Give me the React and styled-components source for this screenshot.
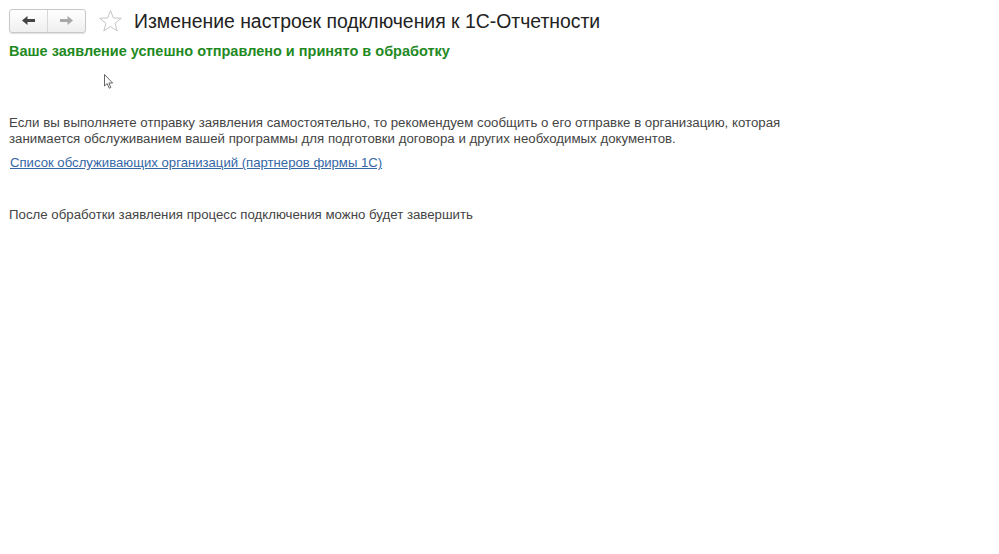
import styled, { createGlobalStyle } from "styled-components";

const GlobalStyle = createGlobalStyle`
  body {
    margin: 0;
    background: #fff;
    font-family: "Liberation Sans", Arial, sans-serif;
  }
`;

const Page = styled.div`
  position: relative;
  width: 999px;
  height: 554px;
  padding: 8px 9px 0 9px;
  box-sizing: border-box;
`;

const Header = styled.div`
  display: flex;
  align-items: center;
  height: 25px;
`;

const NavGroup = styled.div`
  display: flex;
  width: 77px;
  height: 24px;
  border: 1px solid #c8c8c8;
  border-radius: 3px;
  box-sizing: border-box;
  background: linear-gradient(#ffffff, #efefef);
  box-shadow: 0 1px 1px rgba(0, 0, 0, 0.12);
`;

const NavButton = styled.div`
  flex: 1;
  display: flex;
  align-items: center;
  justify-content: center;
  border-left: ${(p) => (p.$divider ? "1px solid #d8d8d8" : "none")};
`;

const StarWrap = styled.div`
  margin-left: 12px;
  width: 26px;
  height: 24px;
  display: flex;
  align-items: center;
`;

const Title = styled.h1`
  margin: 0 0 0 10px;
  font-size: 19.4px;
  font-weight: normal;
  color: #222;
  line-height: 24px;
`;

const Success = styled.div`
  margin-top: 10px;
  font-size: 14.5px;
  font-weight: bold;
  color: #1f8a1f;
  line-height: 16px;
`;

const Text = styled.p`
  margin: ${(p) => p.$top}px 0 0 0;
  font-size: 13.25px;
  line-height: 16px;
  color: #444;
  max-width: 800px;
`;

const Link = styled.a`
  display: inline-block;
  margin: 8px 0 0 1px;
  font-size: 13.15px;
  line-height: 16px;
  color: #3566a6;
  text-decoration: underline;
  cursor: pointer;
`;

const Pointer = styled.div`
  position: absolute;
  left: 104px;
  top: 74px;
`;

function ArrowLeft({ color }) {
  return (
    <svg width="15" height="11" viewBox="0 0 15 11">
      <path d="M1 5.5 L6.5 1 L6.5 4 L14 4 L14 7 L6.5 7 L6.5 10 Z" fill={color} />
    </svg>
  );
}

function ArrowRight({ color }) {
  return (
    <svg width="15" height="11" viewBox="0 0 15 11">
      <path d="M14 5.5 L8.5 1 L8.5 4 L1 4 L1 7 L8.5 7 L8.5 10 Z" fill={color} />
    </svg>
  );
}

function App() {
  return (
    <Page>
      <GlobalStyle />
      <Header>
        <NavGroup>
          <NavButton>
            <ArrowLeft color="#444" />
          </NavButton>
          <NavButton $divider>
            <ArrowRight color="#a8a8a8" />
          </NavButton>
        </NavGroup>
        <StarWrap>
          <svg width="25" height="24" viewBox="0 0 25 24">
            <path
              d="M12.5 1.5 L15.3 8.9 L23.3 9.3 L17 14.3 L19.2 22 L12.5 17.6 L5.8 22 L8 14.3 L1.7 9.3 L9.7 8.9 Z"
              fill="none"
              stroke="#c4c4c4"
              strokeWidth="1"
              strokeLinejoin="round"
            />
          </svg>
        </StarWrap>
        <Title>Изменение настроек подключения к 1С-Отчетности</Title>
      </Header>
      <Success>Ваше заявление успешно отправлено и принято в обработку</Success>
      <Text $top={56}>
        Если вы выполняете отправку заявления самостоятельно, то рекомендуем
        сообщить о его отправке в организацию, которая занимается
        обслуживанием вашей программы для подготовки договора и других
        необходимых документов.
      </Text>
      <Link>Список обслуживающих организаций (партнеров фирмы 1С)</Link>
      <Text $top={36}>
        После обработки заявления процесс подключения можно будет завершить
      </Text>
      <Pointer>
        <svg width="10" height="16" viewBox="0 0 10 16">
          <path
            d="M0.5 0.5 L0.5 12 L3.2 9.6 L5.2 14.2 L6.8 13.5 L4.9 9 L8.6 9 Z"
            fill="#fff"
            stroke="#555"
            strokeWidth="0.9"
            strokeLinejoin="round"
          />
        </svg>
      </Pointer>
    </Page>
  );
}

export default App;
